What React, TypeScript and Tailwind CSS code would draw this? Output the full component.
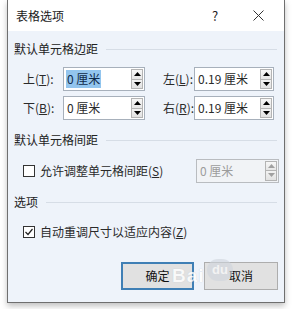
import React from "react";

const font = { fontFamily: '"Noto Sans CJK SC", "Noto Sans", sans-serif' };

function Spinner({ disabled }: { disabled?: boolean }) {
  const tri = disabled ? "#a0a0a0" : "#000";
  return (
    <div className="flex flex-col w-[12px] h-full py-[1px] mr-[1px]">
      <div className="flex-1 flex items-center justify-center border border-[#b4b4b4] bg-gradient-to-b from-[#f7f7f7] to-[#e6e6e6]">
        <svg width="7" height="4" viewBox="0 0 7 4"><path d="M0 4 L3.5 0 L7 4 Z" fill={tri} /></svg>
      </div>
      <div className="flex-1 flex items-center justify-center border border-t-0 border-[#b4b4b4] bg-gradient-to-b from-[#f2f2f2] to-[#e2e2e2]">
        <svg width="7" height="4" viewBox="0 0 7 4"><path d="M0 0 L7 0 L3.5 4 Z" fill={tri} /></svg>
      </div>
    </div>
  );
}

function NumInput({ value, selected, disabled, w }: { value: string; selected?: boolean; disabled?: boolean; w: string }) {
  return (
    <div className={`flex items-center h-[24px] border ${disabled ? "border-[#b9bcc0] bg-[#f1f3f6]" : "border-[#a7b0bb] bg-white"} ${w}`}>
      <div className="flex-1 pl-[2px] flex items-center">
        <span className={`text-[12px] leading-[18px] px-[1px] whitespace-nowrap ${selected ? "bg-[#93c5ee] text-[#102a4a]" : disabled ? "text-[#9c9c9c]" : "text-[#2a2a2a]"}`}>{value}</span>
      </div>
      <Spinner disabled={disabled} />
    </div>
  );
}

function Header({ text }: { text: string }) {
  return (
    <div className="flex items-center h-[16px]">
      <span className="text-[12px] leading-[16px] text-[#222]">{text}</span>
      <div className="flex-1 h-px bg-[#d6dde6] ml-[8px] mr-[7px]" />
    </div>
  );
}

function Checkbox({ checked }: { checked?: boolean }) {
  return (
    <div className="w-[12px] h-[12px] border border-[#333] bg-white flex items-center justify-center">
      {checked && (
        <svg width="10" height="10" viewBox="0 0 10 10"><path d="M1.5 5 L4 7.5 L8.5 2" stroke="#222" strokeWidth="1.2" fill="none" /></svg>
      )}
    </div>
  );
}

export default function App() {
  return (
    <div className="w-[292px] h-[309px] bg-white relative overflow-hidden" style={font}>
      <div className="ml-[7px] w-[278px] h-[303px] border border-t-0 border-[#6f6f6f] flex flex-col shadow-[0_3px_6px_rgba(0,0,0,0.25)]">
        <div className="h-[31px] bg-white flex items-center pl-[8px] shrink-0">
          <span className="text-[12px] text-[#1a1a1a] flex-1">表格选项</span>
          <span className="text-[13px] text-[#222] w-[14px] text-center mr-[31px]">?</span>
          <svg width="11" height="11" viewBox="0 0 11 11" className="mr-[20px]">
            <path d="M0.5 0.5 L10.5 10.5 M10.5 0.5 L0.5 10.5" stroke="#333" strokeWidth="1" />
          </svg>
        </div>
        <div className="flex-1 bg-[#eef3fa] pl-[6px] pt-[10px] flex flex-col">
          <Header text="默认单元格边距" />
          <div className="flex flex-col gap-[5px] mt-[10px]">
            <div className="flex items-center">
              <span className="text-[12px] text-[#2a2a2a] ml-[9px] w-[40px] whitespace-nowrap">上(<u>T</u>):</span>
              <NumInput value="0 厘米" selected w="w-[82px]" />
              <span className="text-[12px] text-[#2a2a2a] ml-[18px] w-[31px] whitespace-nowrap">左(<u>L</u>):</span>
              <NumInput value="0.19 厘米" w="w-[80px]" />
            </div>
            <div className="flex items-center">
              <span className="text-[12px] text-[#2a2a2a] ml-[9px] w-[40px] whitespace-nowrap">下(<u>B</u>):</span>
              <NumInput value="0 厘米" w="w-[82px]" />
              <span className="text-[12px] text-[#2a2a2a] ml-[18px] w-[31px] whitespace-nowrap">右(<u>R</u>):</span>
              <NumInput value="0.19 厘米" w="w-[80px]" />
            </div>
          </div>
          <div className="mt-[12px]">
            <Header text="默认单元格间距" />
          </div>
          <div className="flex items-center mt-[10px] h-[25px]">
            <div className="ml-[9px]"><Checkbox /></div>
            <span className="text-[12px] text-[#2a2a2a] ml-[5px] flex-1 whitespace-nowrap">允许调整单元格间距(<u>S</u>)</span>
            <div className="mr-[5px]"><NumInput value="0 厘米" disabled w="w-[83px]" /></div>
          </div>
          <div className="mt-[11px]">
            <Header text="选项" />
          </div>
          <div className="flex items-center mt-[14px] h-[16px]">
            <div className="ml-[9px]"><Checkbox checked /></div>
            <span className="text-[12px] text-[#2a2a2a] ml-[5px] whitespace-nowrap">自动重调尺寸以适应内容(<u>Z</u>)</span>
          </div>
          <div className="flex justify-end mt-[22px] mr-[6px] gap-[10px]">
            <button className="w-[73px] h-[28px] border-2 border-[#3f7fb5] bg-[#e1e1e1] text-[12px] text-[#111]">确定</button>
            <button className="w-[74px] h-[28px] border border-[#adadad] bg-[#e1e1e1] text-[12px] text-[#111]">取消</button>
          </div>
        </div>
      </div>
      <div className="absolute left-[172px] top-[262px] text-[19px] font-bold text-[#ffffff] opacity-80 tracking-[1px] pointer-events-none" style={{ fontFamily: '"Liberation Sans", sans-serif', textShadow: "0 0 1px #b8c0cc" }}>Bai</div>
      <div className="absolute left-[207px] top-[259px] w-[26px] h-[22px] rounded-full bg-[#cfd5dd] opacity-60 flex items-center justify-center pointer-events-none">
        <span className="text-[13px] font-bold text-white" style={{ fontFamily: '"Liberation Sans", sans-serif' }}>du</span>
      </div>
    </div>
  );
}
